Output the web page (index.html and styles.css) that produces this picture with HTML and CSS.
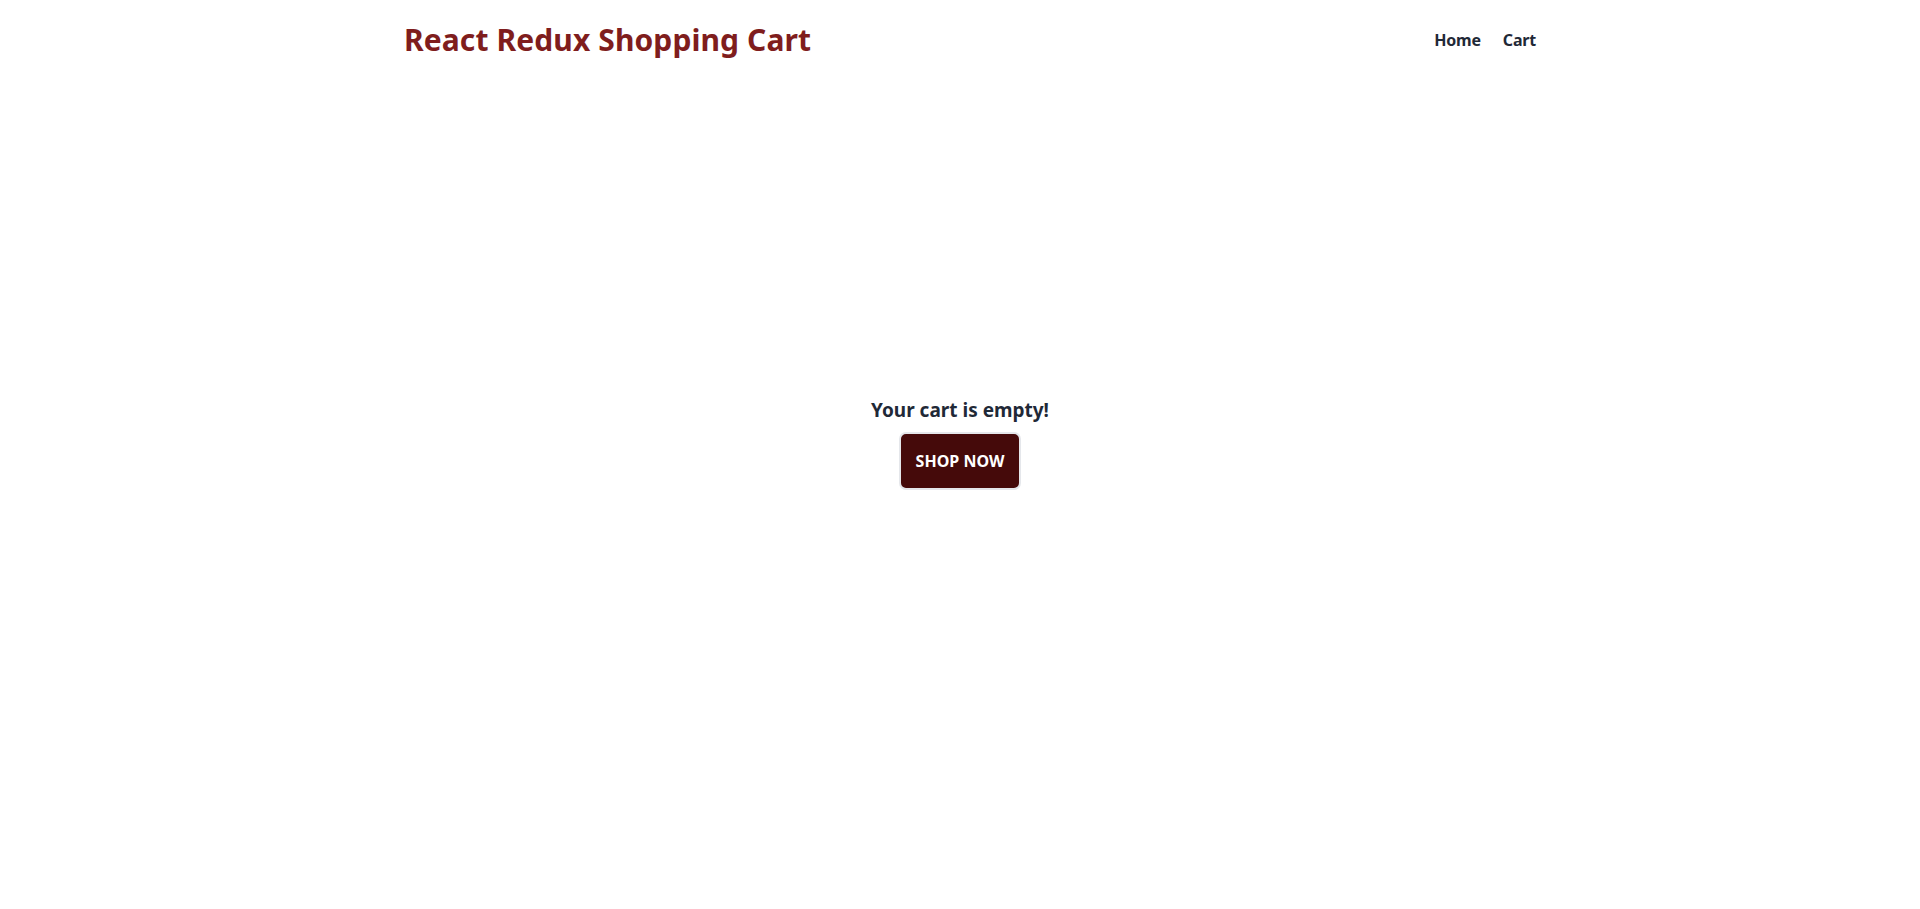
FILE: index.html
```html
<!DOCTYPE html>
<html lang="en">
<head>
<meta charset="utf-8">
<title>React Redux Shopping Cart</title>
<link rel="stylesheet" href="styles.css">
</head>
<body>
<header class="header">
  <div class="container header-inner">
    <a class="brand" href="#">React Redux Shopping Cart</a>
    <nav class="nav">
      <a class="nav-link" href="#">Home</a>
      <a class="nav-link" href="#">Cart</a>
    </nav>
  </div>
</header>
<main class="main">
  <div class="empty">
    <h2 class="empty-title">Your cart is empty!</h2>
    <button class="shop-btn">SHOP NOW</button>
  </div>
</main>
</body>
</html>
```
FILE: styles.css
```css
* { box-sizing: border-box; }
html, body { margin: 0; padding: 0; background: #fff; }
body {
  font-family: "Noto Sans", "Open Sans", sans-serif;
  color: #1f2937;
}
.container {
  width: 1152px;
  margin: 0 auto;
  padding: 0 0 0 20px;
}
.header-inner {
  display: flex;
  align-items: center;
  justify-content: space-between;
  height: 78px;
}
.brand {
  font-size: 30px;
  font-weight: 700;
  color: #7f1d1d;
  text-decoration: none;
  letter-spacing: 0.1px;
}
.nav { display: flex; gap: 22px; align-items: center; padding-top: 2px; }
.nav-link {
  font-size: 16px;
  font-weight: 700;
  color: #1f2937;
  text-decoration: none;
  letter-spacing: -0.2px;
}
.main {
  display: flex;
  justify-content: center;
  padding-top: 318px;
}
.empty {
  display: flex;
  flex-direction: column;
  align-items: center;
}
.empty-title {
  margin: 0;
  font-size: 19px;
  line-height: 28px;
  font-weight: 700;
  color: #1f2937;
}
.shop-btn {
  margin-top: 8px;
  width: 122px;
  height: 58px;
  border: 2px solid #e5e7eb;
  border-radius: 7px;
  background: #450a0a;
  color: #fff;
  font-family: inherit;
  font-size: 16px;
  font-weight: 700;
  cursor: pointer;
}
```
